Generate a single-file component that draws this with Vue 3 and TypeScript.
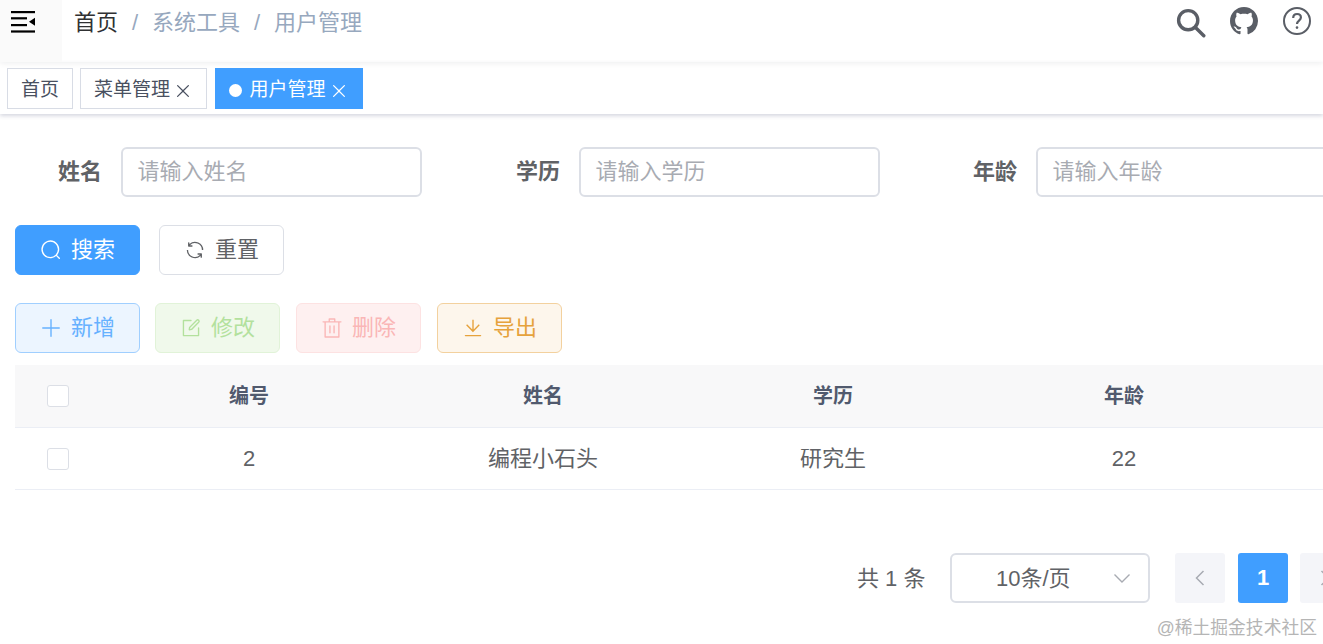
<script setup lang="ts">
const fields: { label: string; placeholder: string }[] = [
  { label: '姓名', placeholder: '请输入姓名' },
  { label: '学历', placeholder: '请输入学历' },
  { label: '年龄', placeholder: '请输入年龄' },
]
const columns: string[] = ['编号', '姓名', '学历', '年龄', '']
const cells: string[] = ['2', '编程小石头', '研究生', '22', '']
</script>

<template>
  <div class="page">
    <header class="navbar">
      <div class="hamburger">
        <svg width="24" height="22" viewBox="0 0 24 22" fill="#000">
          <rect x="0" y="0" width="24" height="2.2" />
          <rect x="0" y="6.2" width="16" height="2.2" />
          <rect x="0" y="13" width="16" height="2.2" />
          <rect x="0" y="19.4" width="24" height="2.2" />
          <path d="M24 6.8v8l-6-4z" />
        </svg>
      </div>
      <nav class="crumbs">
        <span class="crumb-home">首页</span>
        <span class="sep">/</span>
        <span class="crumb">系统工具</span>
        <span class="sep">/</span>
        <span class="crumb">用户管理</span>
      </nav>
      <div class="nav-icons">
        <svg class="i-search" width="30" height="30" viewBox="0 0 30 30" fill="none" stroke="#5a5e66" stroke-width="3.4" stroke-linecap="round">
          <circle cx="12.2" cy="12.2" r="9.6" />
          <path d="M19.5 19.5l8.3 8.3" />
        </svg>
        <svg class="i-github" width="28" height="28" viewBox="0 0 16 16" fill="#5a5e66">
          <path d="M8 0C3.58 0 0 3.58 0 8c0 3.54 2.29 6.53 5.47 7.59.4.07.55-.17.55-.38 0-.19-.01-.82-.01-1.49-2.01.37-2.53-.49-2.69-.94-.09-.23-.48-.94-.82-1.13-.28-.15-.68-.52-.01-.53.63-.01 1.08.58 1.23.82.72 1.21 1.87.87 2.33.66.07-.52.28-.87.51-1.07-1.78-.2-3.64-.89-3.64-3.95 0-.87.31-1.59.82-2.15-.08-.2-.36-1.02.08-2.12 0 0 .67-.21 2.2.82.64-.18 1.32-.27 2-.27.68 0 1.36.09 2 .27 1.53-1.04 2.2-.82 2.2-.82.44 1.1.16 1.92.08 2.12.51.56.82 1.27.82 2.15 0 3.07-1.87 3.75-3.65 3.95.29.25.54.73.54 1.48 0 1.07-.01 1.93-.01 2.2 0 .21.15.46.55.38A8.013 8.013 0 0016 8c0-4.42-3.58-8-8-8z" />
        </svg>
        <svg class="i-help" width="28" height="28" viewBox="0 0 28 28" fill="none" stroke="#5a5e66" stroke-width="2">
          <circle cx="14" cy="14" r="13" />
          <path d="M10.2 11c0-2.5 1.7-4 3.9-4s3.8 1.4 3.8 3.5c0 3-3.9 3.3-3.9 6.5" stroke-width="2.2" />
          <circle cx="14" cy="20.6" r="1.3" fill="#5a5e66" stroke="none" />
        </svg>
      </div>
    </header>

    <div class="tags">
      <span class="tag">首页</span>
      <span class="tag">菜单管理
        <svg class="tag-x" width="20" height="20" viewBox="0 0 1024 1024" fill="currentColor"><path d="M764.288 214.592 512 466.88 259.712 214.592a31.936 31.936 0 0 0-45.12 45.12L466.752 512 214.528 764.224a31.936 31.936 0 1 0 45.12 45.184L512 557.184l252.288 252.288a31.936 31.936 0 0 0 45.12-45.12L557.12 512.064l252.288-252.352a31.936 31.936 0 1 0-45.12-45.184z" /></svg>
      </span>
      <span class="tag tag-active"><i class="dot"></i>用户管理
        <svg class="tag-x" width="20" height="20" viewBox="0 0 1024 1024" fill="currentColor"><path d="M764.288 214.592 512 466.88 259.712 214.592a31.936 31.936 0 0 0-45.12 45.12L466.752 512 214.528 764.224a31.936 31.936 0 1 0 45.12 45.184L512 557.184l252.288 252.288a31.936 31.936 0 0 0 45.12-45.12L557.12 512.064l252.288-252.352a31.936 31.936 0 1 0-45.12-45.184z" /></svg>
      </span>
    </div>

    <main class="content">
      <div class="form-row">
        <div v-for="f in fields" :key="f.label" class="field">
          <label class="field-label">{{ f.label }}</label>
          <div class="input">{{ f.placeholder }}</div>
        </div>
      </div>

      <div class="btn-row first">
        <button class="btn primary">
          <svg width="22" height="22" viewBox="0 0 1024 1024" fill="currentColor"><path d="m795.904 750.72 124.992 124.928a32 32 0 0 1-45.248 45.248L750.656 795.904a416 416 0 1 1 45.248-45.248zM480 832a352 352 0 1 0 0-704 352 352 0 0 0 0 704z" /></svg>
          搜索
        </button>
        <button class="btn plain reset">
          <svg width="22" height="22" viewBox="0 0 1024 1024" fill="currentColor"><path d="M771.776 794.88A384 384 0 0 1 128 512h64a320 320 0 0 0 555.712 216.448H654.72a32 32 0 1 1 0-64h149.056a32 32 0 0 1 32 32v148.928a32 32 0 1 1-64 0v-50.56zM276.288 295.616h92.992a32 32 0 0 1 0 64H220.16a32 32 0 0 1-32-32V178.56a32 32 0 0 1 64 0v50.56A384 384 0 0 1 896.128 512h-64a320 320 0 0 0-555.776-216.384z" /></svg>
          重置
        </button>
      </div>

      <div class="btn-row second">
        <button class="btn add">
          <svg width="22" height="22" viewBox="0 0 1024 1024" fill="currentColor"><path d="M480 480V128a32 32 0 0 1 64 0v352h352a32 32 0 1 1 0 64H544v352a32 32 0 1 1-64 0V544H128a32 32 0 0 1 0-64h352z" /></svg>
          新增
        </button>
        <button class="btn edit">
          <svg width="22" height="22" viewBox="0 0 1024 1024" fill="currentColor"><path d="M832 512a32 32 0 1 1 64 0v352a32 32 0 0 1-32 32H160a32 32 0 0 1-32-32V160a32 32 0 0 1 32-32h352a32 32 0 0 1 0 64H192v640h640V512z" /><path d="m469.952 554.24 52.8-7.552L847.104 222.4a32 32 0 1 0-45.248-45.248L477.44 501.44l-7.552 52.8zm422.4-422.4a96 96 0 0 1 0 135.808l-331.84 331.84a32 32 0 0 1-18.112 9.088L436.8 623.68a32 32 0 0 1-36.224-36.224l15.104-105.6a32 32 0 0 1 9.024-18.112l331.904-331.84a96 96 0 0 1 135.744 0z" /></svg>
          修改
        </button>
        <button class="btn del">
          <svg width="22" height="22" viewBox="0 0 1024 1024" fill="currentColor"><path d="M160 256H96a32 32 0 0 1 0-64h256V95.936a32 32 0 0 1 32-32h256a32 32 0 0 1 32 32V192h256a32 32 0 1 1 0 64h-64v672a32 32 0 0 1-32 32H192a32 32 0 0 1-32-32V256zm448-64v-64H416v64h192zM224 896h576V256H224v640zm192-128a32 32 0 0 1-32-32V416a32 32 0 0 1 64 0v320a32 32 0 0 1-32 32zm192 0a32 32 0 0 1-32-32V416a32 32 0 0 1 64 0v320a32 32 0 0 1-32 32z" /></svg>
          删除
        </button>
        <button class="btn exp">
          <svg width="22" height="22" viewBox="0 0 1024 1024" fill="currentColor"><path d="M160 832h704a32 32 0 1 1 0 64H160a32 32 0 1 1 0-64zm384-253.696 236.288-236.352 45.248 45.248L508.8 704 192 387.2l45.248-45.248L480 584.704V128h64v450.304z" /></svg>
          导出
        </button>
      </div>

      <div class="table">
        <div class="tr th">
          <div class="cell"><span class="check"></span></div>
          <div v-for="(c, i) in columns" :key="i" class="cell">{{ c }}</div>
        </div>
        <div class="tr td">
          <div class="cell"><span class="check"></span></div>
          <div v-for="(c, i) in cells" :key="i" class="cell text">{{ c }}</div>
        </div>
      </div>

      <div class="pager">
        <span class="total">共 1 条</span>
        <div class="select">
          <span class="select-text">10条/页</span>
          <svg class="chev" width="18" height="18" viewBox="0 0 18 18" fill="none" stroke="#a8abb2" stroke-width="1.4"><path d="M1.5 5.5L9 13l7.5-7.5" /></svg>
        </div>
        <span class="page-btn prev">
          <svg width="12" height="18" viewBox="0 0 12 18" fill="none" stroke="#a8abb2" stroke-width="1.5"><path d="M9.5 2L2.5 9l7 7" /></svg>
        </span>
        <span class="page-btn current">1</span>
        <span class="page-btn next">
          <svg width="12" height="18" viewBox="0 0 12 18" fill="none" stroke="#a8abb2" stroke-width="1.5"><path d="M2.5 2l7 7-7 7" /></svg>
        </span>
      </div>
    </main>

    <div class="watermark">@稀土掘金技术社区</div>
  </div>
</template>

<style>
html, body { margin: 0; overflow: hidden; background: #fff; }
</style>

<style scoped>
.page {
  position: relative;
  width: 1323px;
  height: 644px;
  overflow: hidden;
  background: #fff;
  font-family: "Liberation Sans", "Noto Sans CJK SC", sans-serif;
  line-height: 1.2;
  color: #606266;
}
.navbar {
  display: flex;
  height: 62px;
  box-shadow: 0 1px 6px rgba(0, 21, 41, 0.08);
  position: relative;
}
.hamburger {
  width: 62px;
  background: #fafafa;
  padding: 11px 0 0 11px;
  box-sizing: border-box;
}
.hamburger svg { display: block; }
.crumbs {
  display: flex;
  margin-left: 12px;
  font-size: 22px;
  line-height: 46px;
  height: 46px;
}
.crumb-home { color: #303133; }
.crumb { color: #97a8be; }
.sep { color: #97a8be; width: 34px; text-align: center; font-size: 22px; }
.nav-icons {
  margin-left: auto;
  display: flex;
  align-items: flex-start;
  padding-right: 12px;
}
.i-search { margin-top: 8px; }
.i-github { margin: 7px 0 0 24px; }
.i-help { margin: 7px 0 0 25px; }

.tags {
  display: flex;
  align-items: flex-start;
  height: 52px;
  padding: 6px 0 0 7px;
  box-sizing: border-box;
  box-shadow: 0 2px 4px rgba(50, 55, 100, 0.2);
  gap: 7px;
}
.tag {
  height: 41px;
  box-sizing: border-box;
  border: 1px solid #d8dce5;
  padding: 4px 13px 0;
  font-size: 19px;
  color: #495060;
  display: inline-flex;
  align-items: center;
  white-space: nowrap;
}
.tag-x { margin-left: 2.5px; margin-top: 1px; }
.tag-active {
  margin-left: 1px;
  background: #409eff;
  border-color: #409eff;
  color: #fff;
}
.tag-active .tag-x { margin-left: 3.5px; }
.dot {
  width: 13px;
  height: 13px;
  border-radius: 50%;
  background: #fff;
  margin-right: 8px;
}

.content { padding: 0 0 0 15px; }
.form-row {
  display: flex;
  padding-top: 33px;
  width: 1500px;
}
.field {
  width: 458px;
  flex: none;
  display: flex;
  align-items: center;
}
.field:nth-child(3) { margin-left: -1px; }
.field-label {
  width: 106px;
  padding-right: 19px;
  box-sizing: border-box;
  text-align: right;
  font-size: 22px;
  font-weight: 700;
  color: #606266;
}
.input {
  width: 301px;
  height: 50px;
  box-sizing: border-box;
  border: 2px solid #dcdfe6;
  border-radius: 6px;
  padding-left: 14.5px;
  font-size: 22px;
  line-height: 46px;
  color: #a8abb2;
}

.btn-row { display: flex; }
.first { margin-top: 28px; gap: 19px; }
.second { margin-top: 28px; gap: 15px; }
.second .btn:nth-child(4) { margin-left: 1px; }
.second .btn:nth-child(3) { margin-left: 1px; }
.btn {
  width: 125px;
  height: 50px;
  box-sizing: border-box;
  border-radius: 6px;
  border: 1px solid;
  display: flex;
  align-items: center;
  justify-content: center;
  gap: 9px;
  font: inherit;
  font-size: 22px;
  line-height: 1.2;
  padding: 0;
  background: #fff;
}
.primary { background: #409eff; border-color: #409eff; color: #fff; }
.plain { border-color: #dcdfe6; color: #606266; }
.add { background: #ecf5ff; border-color: #a0cfff; color: #66b1ff; }
.edit { background: #f0f9eb; border-color: #e1f3d8; color: #b3e19d; }
.del { background: #fef0f0; border-color: #fde2e2; color: #fab6b6; }
.exp { background: #fdf6ec; border-color: #f3d19e; color: #e6a23c; }

.table { margin-top: 12px; }
.tr {
  display: grid;
  grid-template-columns: 86px 296px 292px 288px 294px 200px;
  border-bottom: 1px solid #ebeef5;
  box-sizing: border-box;
}
.th {
  height: 63px;
  background: #f8f8f9;
  font-size: 20px;
  font-weight: 700;
  color: #515a6e;
}
.td { height: 62px; font-size: 22px; color: #606266; }
.cell {
  display: flex;
  align-items: center;
  justify-content: center;
}
.text { padding-top: 2px; }
.check {
  width: 22px;
  height: 22px;
  box-sizing: border-box;
  border: 1px solid #dcdfe6;
  border-radius: 3px;
  background: #fff;
}

.pager {
  display: flex;
  align-items: center;
  margin-top: 63px;
  padding-left: 842px;
  width: 600px;
  font-size: 22px;
}
.total { width: 93px; flex: none; padding-top: 2px; box-sizing: border-box; }
.select {
  flex: none;
  width: 200px;
  height: 50px;
  box-sizing: border-box;
  border: 2px solid #dcdfe6;
  border-radius: 6px;
  display: flex;
  align-items: center;
  padding: 2px 0 0 44px;
}
.chev { margin-left: auto; margin-right: 17px; margin-bottom: 2px; }
.page-btn {
  flex: none;
  width: 50px;
  height: 50px;
  border-radius: 3px;
  display: flex;
  align-items: center;
  justify-content: center;
}
.prev { margin-left: 25px; background: #f4f5f9; }
.current {
  margin-left: 13px;
  background: #409eff;
  color: #fff;
  font-weight: 700;
}
.next { margin-left: 12px; background: #f4f5f9; }

.watermark {
  position: absolute;
  right: 6px;
  bottom: 4px;
  font-size: 17.8px;
  line-height: 24px;
  color: #b5b5b5;
}
</style>
